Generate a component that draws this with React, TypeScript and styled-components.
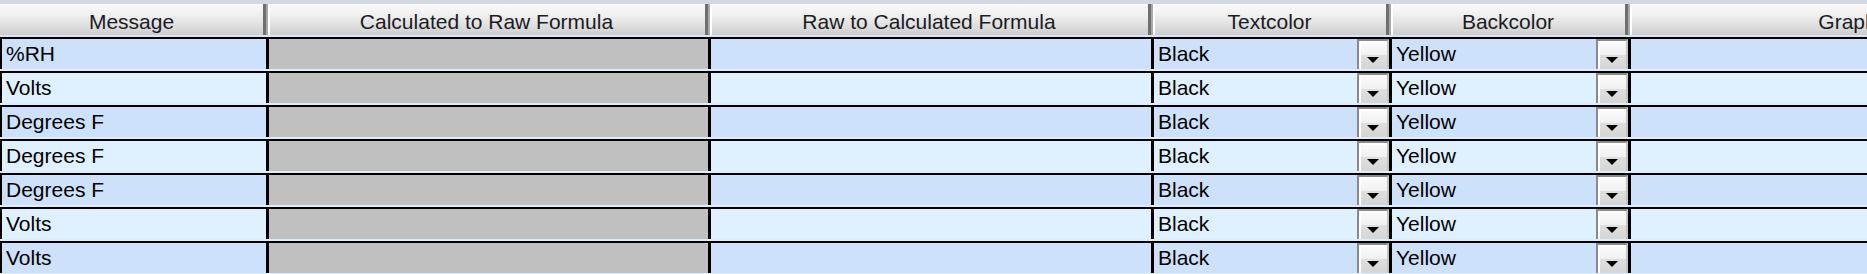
import styled, { createGlobalStyle } from "styled-components";

const GlobalStyle = createGlobalStyle`
  *, *::before, *::after {
    box-sizing: border-box;
  }
  html, body {
    margin: 0;
    padding: 0;
    background: #ffffff;
    overflow: hidden;
  }
`;

const COLUMNS = "266px 442px 443px 238px 239px 440px";

const Viewport = styled.div`
  width: 100%;
  height: 274px;
  overflow: hidden;
  font-family: "Liberation Sans", Arial, sans-serif;
  font-size: 21px;
`;

const Table = styled.div`
  width: 2068px;
`;

const TopStrip = styled.div`
  height: 4px;
  background: #d2d9e3;
`;

const HeaderRow = styled.div`
  display: grid;
  grid-template-columns: ${COLUMNS};
  height: 33px;
  border-bottom: 2px solid #d3e6fb;
`;

const HeaderCell = styled.div<{ $first?: boolean }>`
  height: 31px;
  padding-top: 5px;
  line-height: 26px;
  text-align: center;
  color: #1b1b24;
  white-space: nowrap;
  overflow: hidden;
  background: linear-gradient(#fbfbfb 0%, #eeeeee 40%, #dcdcdc 75%, #cdcdcd 100%);
  border-right: 3px solid #6f6f6f;
  border-left: ${(p) => (p.$first ? "0" : "2px solid #a9a9a9")};
  box-shadow: inset ${(p) => (p.$first ? "0" : "2px")} 0 0 #ffffff;
`;

const Row = styled.div<{ $alt: boolean }>`
  display: grid;
  grid-template-columns: ${COLUMNS};
  border-top: 2px solid #000000;
  border-bottom: 2px solid #dcedfe;
  background: ${(p) => (p.$alt ? "#dff0ff" : "#cde1fa")};
`;

const Cell = styled.div<{ $gray?: boolean }>`
  height: 30px;
  line-height: 30px;
  padding-left: 4px;
  color: #000000;
  white-space: nowrap;
  overflow: hidden;
  border-left: 3px solid #000000;
  background: ${(p) => (p.$gray ? "#c0c0c0" : "transparent")};

  &:first-child {
    border-left-width: 2px;
  }
`;

const ComboCell = styled(Cell)`
  display: flex;
  justify-content: space-between;
  padding-right: 0;
`;

const DropButton = styled.div`
  width: 32px;
  height: 30px;
  flex-shrink: 0;
  display: flex;
  align-items: flex-end;
  justify-content: center;
  padding-bottom: 6px;
  border-left: 2px solid #8a8a8a;
  border-top: 2px solid #8a8a8a;
  border-right: 2px solid #c4c4c4;
  box-shadow: inset 2px 2px 0 #ffffff;
  background: linear-gradient(#fbfbfb 0%, #f1f1f1 48%, #dedede 52%, #d6d6d6 100%);
`;

const Arrow = () => (
  <svg width="12" height="6" viewBox="0 0 12 6">
    <polygon points="0,0 12,0 6,6" fill="#000000" />
  </svg>
);

const headers = [
  "Message",
  "Calculated to Raw Formula",
  "Raw to Calculated Formula",
  "Textcolor",
  "Backcolor",
  "Graph",
];

const rows = [
  { message: "%RH", textcolor: "Black", backcolor: "Yellow" },
  { message: "Volts", textcolor: "Black", backcolor: "Yellow" },
  { message: "Degrees F", textcolor: "Black", backcolor: "Yellow" },
  { message: "Degrees F", textcolor: "Black", backcolor: "Yellow" },
  { message: "Degrees F", textcolor: "Black", backcolor: "Yellow" },
  { message: "Volts", textcolor: "Black", backcolor: "Yellow" },
  { message: "Volts", textcolor: "Black", backcolor: "Yellow" },
];

const App = () => {
  return (
    <Viewport>
      <GlobalStyle />
      <Table>
        <TopStrip />
        <HeaderRow>
          {headers.map((h, i) => (
            <HeaderCell key={h} $first={i === 0}>
              {h}
            </HeaderCell>
          ))}
        </HeaderRow>
        {rows.map((r, i) => (
          <Row key={i} $alt={i % 2 === 1}>
            <Cell>{r.message}</Cell>
            <Cell $gray />
            <Cell />
            <ComboCell>
              <span>{r.textcolor}</span>
              <DropButton>
                <Arrow />
              </DropButton>
            </ComboCell>
            <ComboCell>
              <span>{r.backcolor}</span>
              <DropButton>
                <Arrow />
              </DropButton>
            </ComboCell>
            <Cell />
          </Row>
        ))}
      </Table>
    </Viewport>
  );
};

export default App;
